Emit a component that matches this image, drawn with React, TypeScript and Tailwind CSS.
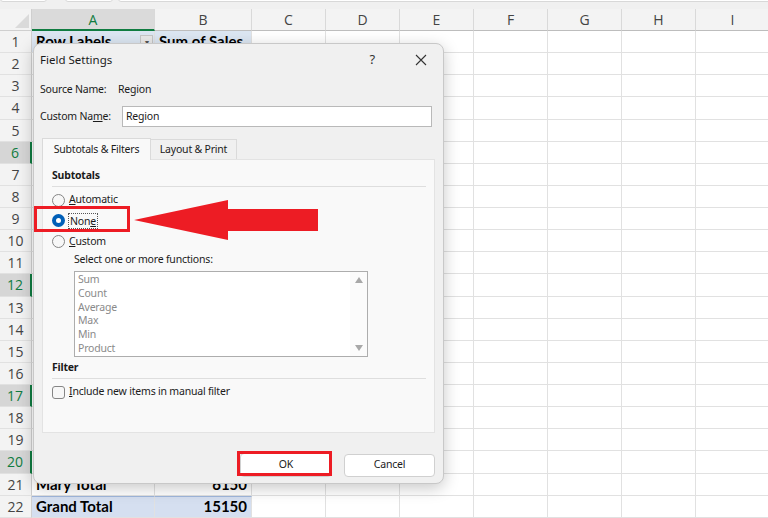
import React from "react";

const cols = [
  { l: "A", w: 123 },
  { l: "B", w: 97 },
  { l: "C", w: 74 },
  { l: "D", w: 74 },
  { l: "E", w: 74 },
  { l: "F", w: 74 },
  { l: "G", w: 74 },
  { l: "H", w: 74 },
  { l: "I", w: 74 },
];

const selectedRows = [6, 12, 17, 20];

function Cell({ w, children, className = "" }: { w: number; children?: React.ReactNode; className?: string }) {
  return (
    <div
      className={"shrink-0 h-full border-r border-b border-[#e1e1e1] flex items-center px-[4px] " + className}
      style={{ width: w }}
    >
      {children}
    </div>
  );
}

function Row({ n }: { n: number }) {
  const sel = selectedRows.includes(n);
  let a: React.ReactNode = null;
  let b: React.ReactNode = null;
  let bg = "";
  if (n === 1) {
    bg = "bg-[#dce6f2]";
    a = (
      <div className="flex w-full items-center justify-between">
        <span className="font-bold">Row Labels</span>
        <span className="w-[13px] h-[13px] bg-[#e9e9e9] border border-[#c6c6c6] flex items-center justify-center text-[8px] text-[#555] leading-none mr-[-3px]">▾</span>
      </div>
    );
    b = <span className="font-bold">Sum of Sales</span>;
  } else if (n === 21) {
    a = <span className="font-bold">Mary Total</span>;
    b = <span className="font-bold w-full text-right">6150</span>;
  } else if (n === 22) {
    bg = "bg-[#d5dff0]";
    a = <span className="font-bold">Grand Total</span>;
    b = <span className="font-bold w-full text-right">15150</span>;
  }
  return (
    <div className="flex h-[22.14px] text-[15px] text-black">
      <div
        className={
          "shrink-0 w-[32px] h-full flex items-center justify-center text-[14px] border-b border-[#e1e1e1] " +
          (sel
            ? "bg-[#d6d6d6] text-[#107c41] border-r-2 border-r-[#107c41]"
            : "bg-[#f3f3f3] text-[#444] border-r border-r-[#d0d0d0]")
        }
        style={{ fontFamily: "'Open Sans', 'Noto Sans', sans-serif" }}
      >
        {n}
      </div>
      <Cell w={cols[0].w} className={bg + (n === 22 ? " border-t border-t-[#9fb6dc]" : "")}>{a}</Cell>
      <Cell w={cols[1].w} className={bg + (n === 22 ? " border-t border-t-[#9fb6dc]" : "")}>{b}</Cell>
      {cols.slice(2).map((c) => (
        <Cell key={c.l} w={c.w} />
      ))}
    </div>
  );
}

function Radio({ checked }: { checked?: boolean }) {
  if (checked) {
    return (
      <span className="shrink-0 w-[13px] h-[13px] rounded-full bg-[#005fb8] flex items-center justify-center">
        <span className="w-[5px] h-[5px] rounded-full bg-white" />
      </span>
    );
  }
  return <span className="shrink-0 w-[13px] h-[13px] rounded-full border border-[#858585] bg-[#f7f7f7]" />;
}

export default function App() {
  const fnItems = ["Sum", "Count", "Average", "Max", "Min", "Product"];
  return (
    <div
      className="relative w-[768px] h-[518px] overflow-hidden bg-white"
      style={{ fontFamily: "'Lato', 'Liberation Sans', sans-serif" }}
    >
      {/* top strip */}
      <div className="relative h-[9px] bg-[#f0f0f0]">
        <div className="absolute left-0 top-[-4px] w-[47px] h-[6px] bg-white rounded-b-[3px] border border-[#d8d8d8]" />
        <div className="absolute left-[65px] top-[-4px] w-[48px] h-[6px] bg-white rounded-b-[3px] border border-[#d8d8d8]" />
        <div className="absolute left-[118px] top-[-4px] w-[660px] h-[6px] bg-white rounded-b-[3px] border border-[#d8d8d8]" />
      </div>
      {/* column header */}
      <div
        className="flex h-[22px] bg-[#f3f3f3] text-[14px] text-[#444]"
        style={{ fontFamily: "'Open Sans', 'Noto Sans', sans-serif" }}
      >
        <div className="relative shrink-0 w-[32px] h-full border-r border-b border-[#cfcfcf]">
          <svg className="absolute right-[2px] bottom-[2px]" width="14" height="14" viewBox="0 0 14 14">
            <polygon points="14,0 14,14 0,14" fill="#dadada" />
          </svg>
        </div>
        {cols.map((c) => (
          <div
            key={c.l}
            className={
              "shrink-0 h-full flex items-center justify-center border-r border-[#d9d9d9] " +
              (c.l === "A"
                ? "bg-[#dadada] text-[#107c41] border-b-2 border-b-[#107c41]"
                : "border-b border-b-[#bdbdbd]")
            }
            style={{ width: c.w }}
          >
            {c.l}
          </div>
        ))}
      </div>
      {Array.from({ length: 22 }, (_, i) => (
        <Row key={i} n={i + 1} />
      ))}

      {/* Dialog */}
      <div
        className="absolute left-[33px] top-[43px] w-[411px] h-[441px] rounded-[8px] bg-[#f0f0f0] border border-[#c8c8c8] shadow-[0_4px_16px_rgba(0,0,0,0.22)] text-[10.5px] tracking-[-0.2px] text-[#1b1b1b]"
        style={{ fontFamily: "'Noto Sans', 'Open Sans', sans-serif" }}
      >
        {/* title bar */}
        <div className="flex h-[32px] items-center pl-[6px] pr-[14px]">
          <span className="text-[11.5px] tracking-normal">Field Settings</span>
          <span className="ml-auto mr-[40px] text-[13px] text-[#333]">?</span>
          <svg width="12" height="12" viewBox="0 0 12 12" className="mr-[2px]">
            <path d="M1 1 L11 11 M11 1 L1 11" stroke="#333" strokeWidth="1.1" />
          </svg>
        </div>
        <div className="px-[7px]">
          <div className="mt-[2px] flex h-[24px] items-center">
            <span className="w-[78px] ml-[-1px]">Source Name:</span>
            <span>Region</span>
          </div>
          <div className="mt-[4px] flex h-[21px] items-center">
            <span className="w-[82px] ml-[-1px]">
              Custom Na<span className="underline">m</span>e:
            </span>
            <div className="h-[21px] w-[310px] bg-white border border-[#b9b9b9] flex items-center px-[3px]">Region</div>
          </div>
          {/* tabs */}
          <div className="mt-[11px] flex h-[21px] items-end pl-[1px]">
            <div className="h-[22px] w-[109px] bg-[#f9f9f9] border border-b-0 border-[#dadada] flex items-center justify-center relative z-10 mb-[-1px]">
              Subtotals &amp; Filters
            </div>
            <div className="h-[20px] w-[86px] bg-[#f0f0f0] border border-l-0 border-b-0 border-[#dadada] flex items-center justify-center">
              Layout &amp; Print
            </div>
          </div>
          {/* panel */}
          <div className="ml-[1px] h-[274px] w-[393px] bg-[#f9f9f9] border border-[#e3e3e3] pl-[9px] pr-[8px] pt-[8px]">
            <div className="h-[16px] flex items-center font-bold">Subtotals</div>
            <div className="mt-[2px] border-b border-[#dedede]" />
            <div className="mt-[3px] flex h-[20px] items-center gap-[4px]">
              <Radio />
              <span>
                <span className="underline">A</span>utomatic
              </span>
            </div>
            <div className="flex h-[21px] items-center gap-[3px]">
              <Radio checked />
              <span className="border border-dotted border-[#555] px-[1px] leading-[14px]">
                Non<span className="underline">e</span>
              </span>
            </div>
            <div className="flex h-[21px] items-center gap-[4px]">
              <Radio />
              <span>
                <span className="underline">C</span>ustom
              </span>
            </div>
            <div className="ml-[22px] h-[16px] flex items-center">Select one or more functions:</div>
            <div className="ml-[22px] mt-[3px] flex h-[86px] w-[294px] bg-white border border-[#adadad] overflow-hidden">
              <div className="flex-1 pt-[1px] pl-[3px] text-[#8a8a8a]">
                {fnItems.map((f) => (
                  <div key={f} className="h-[13.8px] leading-[13.8px]">
                    {f}
                  </div>
                ))}
              </div>
              <div className="w-[17px] flex flex-col items-center justify-between py-[5px] bg-[#fbfbfb]">
                <svg width="8" height="6" viewBox="0 0 8 6">
                  <polygon points="4,0 8,6 0,6" fill="#a8a8a8" />
                </svg>
                <svg width="8" height="6" viewBox="0 0 8 6">
                  <polygon points="0,0 8,0 4,6" fill="#a8a8a8" />
                </svg>
              </div>
            </div>
            <div className="mt-[3px] h-[16px] flex items-center font-bold">Filter</div>
            <div className="mt-[2px] border-b border-[#dedede]" />
            <div className="mt-[4px] flex h-[18px] items-center gap-[4px]">
              <span className="w-[13px] h-[13px] rounded-[3px] border border-[#858585] bg-[#f7f7f7]" />
              <span>
                <span className="underline">I</span>nclude new items in manual filter
              </span>
            </div>
          </div>
          {/* buttons */}
          <div className="mt-[20px] flex h-[24px] items-center justify-end gap-[12px] pr-[1px]">
            <div className="h-[24px] w-[92px] bg-white border border-[#d0d0d0] rounded-[4px] flex items-center justify-center">OK</div>
            <div className="h-[23px] w-[91px] bg-white border border-[#d0d0d0] rounded-[4px] flex items-center justify-center">Cancel</div>
          </div>
        </div>
      </div>

      {/* annotations */}
      <div className="absolute left-[34px] top-[206px] w-[96px] h-[26px] border-[3px] border-[#ed1c24]" />
      <div className="absolute left-[237px] top-[451px] w-[95px] h-[25px] border-[3px] border-[#ed1c24]" />
      <svg className="absolute left-0 top-0" width="768" height="518" viewBox="0 0 768 518">
        <polygon points="134,220 228,200 228,209 318,209 318,231 228,231 228,240" fill="#ed1c24" />
      </svg>
    </div>
  );
}
